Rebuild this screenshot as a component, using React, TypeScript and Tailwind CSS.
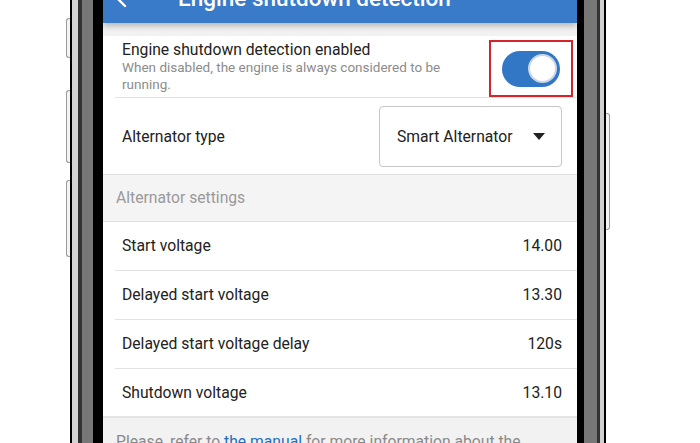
import React from 'react';

const rows = [
  { label: 'Start voltage', value: '14.00' },
  { label: 'Delayed start voltage', value: '13.30' },
  { label: 'Delayed start voltage delay', value: '120s' },
  { label: 'Shutdown voltage', value: '13.10' },
];

function Toggle() {
  return (
    <div className="flex h-[36px] w-[58px] items-center justify-end rounded-full bg-[#3276c6] pr-[3px]">
      <div className="h-[29px] w-[29px] rounded-full border-2 border-[#c9d6e6] bg-white" />
    </div>
  );
}

export default function App() {
  return (
    <div
      className="flex h-[443px] w-[700px] overflow-hidden bg-white"
      style={{ fontFamily: 'Roboto, "Liberation Sans", sans-serif' }}
    >
      {/* left side buttons */}
      <div className="ml-[66px] flex w-[4px] flex-col">
        <div className="mt-[18px] h-[40px] rounded-l-[3px] border border-r-0 border-[#9a9a9a] bg-[#f4f4f4]" />
        <div className="mt-[32px] h-[73px] rounded-l-[3px] border border-r-0 border-[#9a9a9a] bg-[#f4f4f4]" />
        <div className="mt-[17px] h-[77px] rounded-l-[3px] border border-r-0 border-[#9a9a9a] bg-[#f4f4f4]" />
      </div>

      {/* left frame */}
      <div className="flex">
        <div className="w-[2px] bg-black" />
        <div className="w-[6px] bg-[#d4d4d4]" />
        <div className="w-[4px] bg-[#333]" />
        <div className="w-[11px] bg-[#777]" />
        <div className="w-[10px] bg-black" />
      </div>

      {/* screen */}
      <div className="flex w-[474px] flex-col bg-[#f2f2f2]">
        <div className="-mt-[25px] flex h-[48px] shrink-0 items-center bg-[#3a7bc9] shadow-[0_3px_6px_rgba(0,0,0,0.25)]">
          <svg width={12} height={20} viewBox="0 0 12 20" className="ml-[13px]" fill="none" stroke="white" strokeWidth={2.4} strokeLinecap="round">
            <path d="M9 3L2 10l7 7" />
          </svg>
          <span className="ml-[50px] text-[22.5px] font-medium text-white">Engine shutdown detection</span>
        </div>

        <div className="mt-[13px] flex flex-col bg-white">
          {/* enable row */}
          <div className="ml-[12px] flex border-b border-[#e2e2e2] pr-[4px]">
            <div className="flex flex-1 flex-col pl-[7px] pt-[4px]">
              <span className="text-[15.7px] leading-[19px] text-[#222]">Engine shutdown detection enabled</span>
              <span className="w-[330px] text-[13.5px] leading-[17px] text-[#8c8c8c]">
                When disabled, the engine is always considered to be running.
              </span>
            </div>
            <div className="mt-[4px] flex h-[57px] w-[84px] items-center justify-center border-2 border-[#d3262c]">
              <Toggle />
            </div>
          </div>

          {/* alternator type */}
          <div className="flex items-center pb-[7px] pl-[19px] pr-[15px] pt-[8px]">
            <span className="flex-1 text-[15.7px] text-[#222]">Alternator type</span>
            <div className="flex h-[61px] w-[183px] items-center justify-between rounded-[4px] border border-[#c6c6c6] pl-[17px] pr-[16px]">
              <span className="text-[15.7px] text-[#222]">Smart Alternator</span>
              <svg width={12} height={7} viewBox="0 0 12 7">
                <path d="M0 0h12L6 7z" fill="#222" />
              </svg>
            </div>
          </div>

          {/* section header */}
          <div className="flex h-[48px] items-center border-y border-[#e0e0e0] bg-[#f4f4f4] pl-[13px]">
            <span className="text-[15.7px] text-[#9a9a9a]">Alternator settings</span>
          </div>

          {rows.map((r, i) => (
            <div
              key={r.label}
              className={
                i === rows.length - 1
                  ? 'flex h-[49px] items-center border-b-2 border-[#e4e4e4] pl-[19px] pr-[15px]'
                  : 'ml-[12px] flex h-[49px] items-center border-b border-[#e2e2e2] pl-[7px] pr-[15px]'
              }
            >
              <span className="flex-1 text-[15.7px] text-[#222]">{r.label}</span>
              <span className="text-[15.7px] text-[#222]">{r.value}</span>
            </div>
          ))}
        </div>

        <div className="pl-[13px] pt-[12px] text-[15.7px] text-[#8a8a8a]">
          Please, refer to <span className="text-[#1f6fc2]">the manual</span> for more information about the
        </div>
      </div>

      {/* right frame */}
      <div className="flex">
        <div className="w-[7px] bg-black" />
        <div className="w-[13px] bg-[#777]" />
        <div className="w-[3px] bg-[#333]" />
        <div className="w-[4px] bg-[#cfcfcf]" />
        <div className="w-[2px] bg-black" />
      </div>

      {/* right side button */}
      <div className="flex w-[4px] flex-col">
        <div className="mt-[113px] h-[117px] rounded-r-[3px] border border-l-0 border-[#9a9a9a] bg-[#f4f4f4]" />
      </div>
    </div>
  );
}
